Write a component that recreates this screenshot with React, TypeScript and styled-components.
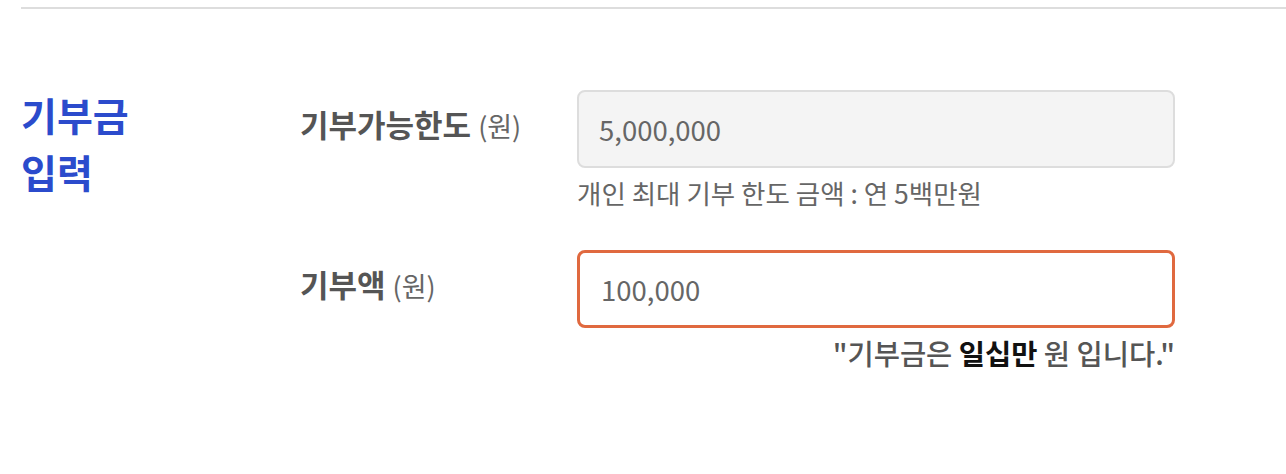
import React from "react";
import styled, { createGlobalStyle } from "styled-components";

const Global = createGlobalStyle`
  html, body { margin: 0; padding: 0; background: #fff; }
  body { font-family: "Noto Sans CJK KR", "Noto Sans", sans-serif; }
`;

const Page = styled.div`
  padding-left: 21px;
`;

const Divider = styled.hr`
  margin: 7px 0 0;
  border: 0;
  border-top: 2px solid #dddddd;
`;

const Section = styled.section`
  display: grid;
  grid-template-columns: 279px 875px;
  padding-top: 77px;
`;

const Title = styled.h2`
  margin: 0;
  font-size: 39px;
  line-height: 57px;
  font-weight: 700;
  color: #2b4bcc;
`;

const Rows = styled.div`
  display: grid;
  grid-template-columns: 277px 598px;
  padding-top: 4px;
`;

const Label = styled.div<{ $top: number }>`
  padding-top: ${(p) => p.$top}px;
  font-size: 31px;
  font-weight: 700;
  color: #555;
  line-height: 40px;
`;

const Unit = styled.span`
  font-size: 27px;
  font-weight: 400;
  color: #666;
  margin-left: 7px;
`;

const Field = styled.div<{ $gap: number }>`
  display: flex;
  flex-direction: column;
  padding-bottom: ${(p) => p.$gap}px;
`;

const Input = styled.input<{ $error?: boolean }>`
  box-sizing: border-box;
  width: 598px;
  height: 78px;
  border-radius: 8px;
  border: ${(p) => (p.$error ? "3px solid #e0693f" : "2px solid #dddddd")};
  background: ${(p) => (p.$error ? "#fff" : "#f4f4f4")};
  font-family: "Noto Sans CJK KR", "Noto Sans", sans-serif;
  font-size: 27.5px;
  color: #666;
  outline: none;
  padding: 0 0 0 ${(p) => (p.$error ? "21px" : "20px")};
`;

const Help = styled.p`
  margin: 8px 0 0;
  font-size: 26.5px;
  line-height: 34px;
  color: #666;
`;

const Note = styled.p`
  margin: 6px 0 0;
  font-size: 28.5px;
  line-height: 38px;
  color: #555;
  text-align: right;
  font-weight: 500;
  b { color: #111; font-weight: 700; }
`;

export default function App() {
  return (
    <Page>
      <Global />
      <Divider />
      <Section>
        <Title>
          기부금
          <br />
          입력
        </Title>
        <Rows>
          <Label $top={14}>
            기부가능한도<Unit>(원)</Unit>
          </Label>
          <Field $gap={40}>
            <Input readOnly value="5,000,000" />
            <Help>개인 최대 기부 한도 금액 : 연 5백만원</Help>
          </Field>
          <Label $top={14}>
            기부액<Unit>(원)</Unit>
          </Label>
          <Field $gap={0}>
            <Input $error readOnly value="100,000" />
            <Note>
              "기부금은 <b>일십만</b> 원 입니다."
            </Note>
          </Field>
        </Rows>
      </Section>
    </Page>
  );
}
